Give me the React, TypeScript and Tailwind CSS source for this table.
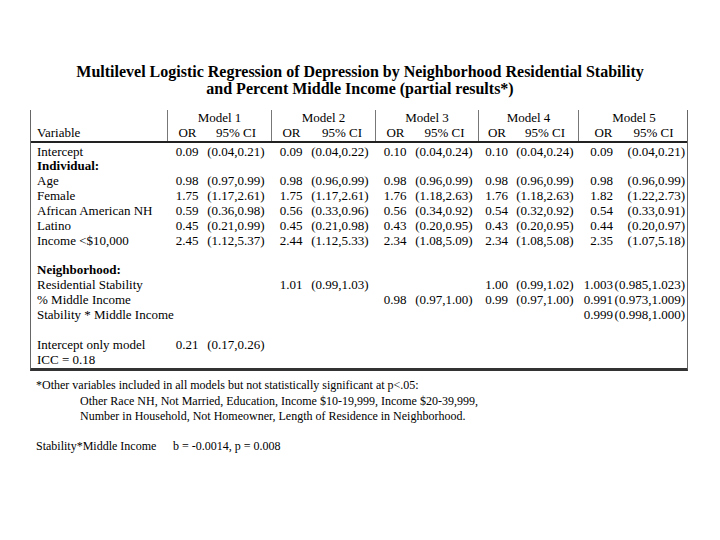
const cols = 'grid grid-cols-[136px_40px_64px_40px_64px_40px_63px_37px_63px_50px_61px]';

type Row = { label: string; bold?: boolean; vals?: (string | null)[] };

// OR / CI pairs for models 1..5, null = empty cell
const rows: Row[] = [
  { label: 'Intercept', vals: ['0.09', '(0.04,0.21)', '0.09', '(0.04,0.22)', '0.10', '(0.04,0.24)', '0.10', '(0.04,0.24)', '0.09', '(0.04,0.21)'] },
  { label: 'Individual:', bold: true },
  { label: 'Age', vals: ['0.98', '(0.97,0.99)', '0.98', '(0.96,0.99)', '0.98', '(0.96,0.99)', '0.98', '(0.96,0.99)', '0.98', '(0.96,0.99)'] },
  { label: 'Female', vals: ['1.75', '(1.17,2.61)', '1.75', '(1.17,2.61)', '1.76', '(1.18,2.63)', '1.76', '(1.18,2.63)', '1.82', '(1.22,2.73)'] },
  { label: 'African American NH', vals: ['0.59', '(0.36,0.98)', '0.56', '(0.33,0.96)', '0.56', '(0.34,0.92)', '0.54', '(0.32,0.92)', '0.54', '(0.33,0.91)'] },
  { label: 'Latino', vals: ['0.45', '(0.21,0.99)', '0.45', '(0.21,0.98)', '0.43', '(0.20,0.95)', '0.43', '(0.20,0.95)', '0.44', '(0.20,0.97)'] },
  { label: 'Income <$10,000', vals: ['2.45', '(1.12,5.37)', '2.44', '(1.12,5.33)', '2.34', '(1.08,5.09)', '2.34', '(1.08,5.08)', '2.35', '(1.07,5.18)'] },
  { label: '' },
  { label: 'Neighborhood:', bold: true },
  { label: 'Residential Stability', vals: [null, null, '1.01', '(0.99,1.03)', null, null, '1.00', '(0.99,1.02)', '1.003', '(0.985,1.023)'] },
  { label: '% Middle Income', vals: [null, null, null, null, '0.98', '(0.97,1.00)', '0.99', '(0.97,1.00)', '0.991', '(0.973,1.009)'] },
  { label: 'Stability * Middle Income', vals: [null, null, null, null, null, null, null, null, '0.999', '(0.998,1.000)'] },
  { label: '' },
  { label: 'Intercept only model', vals: ['0.21', '(0.17,0.26)'] },
  { label: 'ICC  = 0.18' },
];

// per-cell alignment so numbers sit where the print has them
const cellCls = [
  'flex justify-center',
  'flex justify-center pr-[6px]',
  'flex justify-center',
  'flex justify-center pr-[6px]',
  'flex justify-center',
  'flex justify-center pr-[5px]',
  'flex justify-center',
  'flex justify-center pr-[3px]',
  'flex justify-end pr-[15px]',
  'flex justify-end pr-[4px]',
];

const ciHead = ['pr-[6px]', 'pr-[2px]', 'pr-[4px]', 'pr-[3px]', 'pr-[10px]'];

const sep = 'border-l border-[#777]';

export default function App() {
  return (
    <div className="w-[720px] h-[540px] bg-white text-black font-['Liberation_Serif',serif] overflow-hidden">
      <div className="pt-[63px] text-center font-bold text-[16px] leading-[17px]">
        <div>Multilevel Logistic Regression of Depression by Neighborhood Residential Stability</div>
        <div>and Percent Middle Income (partial results*)</div>
      </div>

      <div className="ml-[30px] mt-[13px] w-[658px] border-x border-[#666] border-b-[3px] border-b-[#333] text-[13px] leading-[15px]">
        {/* header */}
        <div className={`${cols} border-b-2 border-[#222]`}>
          <div className="row-span-2 flex items-end pl-[6px] pb-[1px]">Variable</div>
          {['Model 1', 'Model 2', 'Model 3', 'Model 4', 'Model 5'].map((m) => (
            <div key={m} className={`col-span-2 h-[15px] text-center ${sep}`}>{m}</div>
          ))}
          {ciHead.map((pad, m) => (
            <div key={m} className={`col-span-2 grid grid-cols-subgrid h-[16px] ${sep}`}>
              <div className="text-center">OR</div>
              <div className={`text-center ${pad}`}>95% CI</div>
            </div>
          ))}
        </div>

        {/* body */}
        <div className="pt-[0.5px] pb-[2px]">
          {rows.map((r, i) => (
            <div key={i} className={`${cols} h-[14.86px]`}>
              <div className={`pl-[6px] whitespace-nowrap ${r.bold ? 'font-bold' : ''}`}>{r.label}</div>
              {Array.from({ length: 10 }).map((_, j) => (
                <div key={j} className={`whitespace-nowrap ${cellCls[j]}`}>
                  <span className="shrink-0">{r.vals?.[j] ?? ''}</span>
                </div>
              ))}
            </div>
          ))}
        </div>
      </div>

      <div className="mt-[7px] pl-[36px] text-[12px] leading-[15.5px]">
        <div>*Other variables included in all models but not statistically significant at p&lt;.05:</div>
        <div className="pl-[44px]">Other Race NH, Not Married, Education, Income $10-19,999, Income $20-39,999,</div>
        <div className="pl-[44px]">Number in Household, Not Homeowner, Length of Residence in Neighborhood.</div>
        <div className="mt-[14px] flex">
          <span className="w-[137px]">Stability*Middle Income</span>
          <span>b = -0.0014, p = 0.008</span>
        </div>
      </div>
    </div>
  );
}
